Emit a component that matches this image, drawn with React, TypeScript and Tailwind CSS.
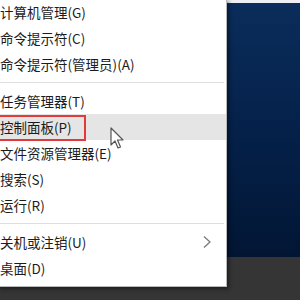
import { ReactNode } from 'react';

//region Menu Item
const MenuItem = ({
	active = false,
	boxed = false,
	submenu = false,
	children,
}: {
	active?: boolean;
	boxed?: boolean;
	submenu?: boolean;
	children?: ReactNode;
}) => {
	return (
		<div className={`relative flex h-[26px] items-center pr-[14px] ${active ? 'bg-[#e5e5e5]' : ''}`}>
			<span className="pl-[3px] whitespace-nowrap">{children}</span>
			{boxed && (
				<div className="pointer-events-none absolute -left-1 top-[1px] h-[26px] w-[93px] border-2 border-[#e2393b]" />
			)}
			{submenu && (
				<svg className="ml-auto" width="10" height="14" viewBox="0 0 10 14">
					<path d="M2 1.5 L8 7 L2 12.5" fill="none" stroke="#7a7a7a" strokeWidth="1.3" />
				</svg>
			)}
		</div>
	);
};

const Separator = () => (
	<div className="flex h-[11px] items-center pr-[2px]">
		<div className="h-px w-full bg-[#dedede]" />
	</div>
);

//region Cursor
const Cursor = () => (
	<svg className="absolute left-[110px] top-[127px]" width="16" height="24" viewBox="0 0 16 24">
		<path
			d="M1 1 L1 18 L5 14 L8 21 L10.5 20 L7.5 13 L13 13 Z"
			fill="#ffffff"
			stroke="#555"
			strokeWidth="1.2"
			strokeLinejoin="round"
		/>
	</svg>
);

//region App
const App = () => {
	return (
		<div
			className="relative h-[300px] w-[300px] overflow-hidden text-[13.5px] text-[#1b1b1b]"
			style={{ fontFamily: '"Noto Sans CJK SC", "Noto Sans", sans-serif' }}
		>
			{/* desktop */}
			<div className="flex h-full w-full flex-col">
				<div className="h-[3px] bg-[#eef0f3]" />
				<div className="h-[254px] bg-gradient-to-b from-[#0b2d5b] via-[#05214a] to-[#021634]" />
				<div className="grow bg-[#353535]" />
			</div>

			{/* context menu */}
			<div className="absolute -left-[3px] -top-[1px] w-[230px] border-r border-b border-[#b9b9b9] bg-white pb-[5px] shadow-[2px_2px_4px_rgba(0,0,0,0.45)]">
				<MenuItem>计算机管理(G)</MenuItem>
				<MenuItem>命令提示符(C)</MenuItem>
				<MenuItem>命令提示符(管理员)(A)</MenuItem>
				<Separator />
				<MenuItem>任务管理器(T)</MenuItem>
				<MenuItem active boxed>
					控制面板(P)
				</MenuItem>
				<MenuItem>文件资源管理器(E)</MenuItem>
				<MenuItem>搜索(S)</MenuItem>
				<MenuItem>运行(R)</MenuItem>
				<Separator />
				<MenuItem submenu>关机或注销(U)</MenuItem>
				<MenuItem>桌面(D)</MenuItem>
			</div>

			<Cursor />
		</div>
	);
};
//endregion

export default App;
